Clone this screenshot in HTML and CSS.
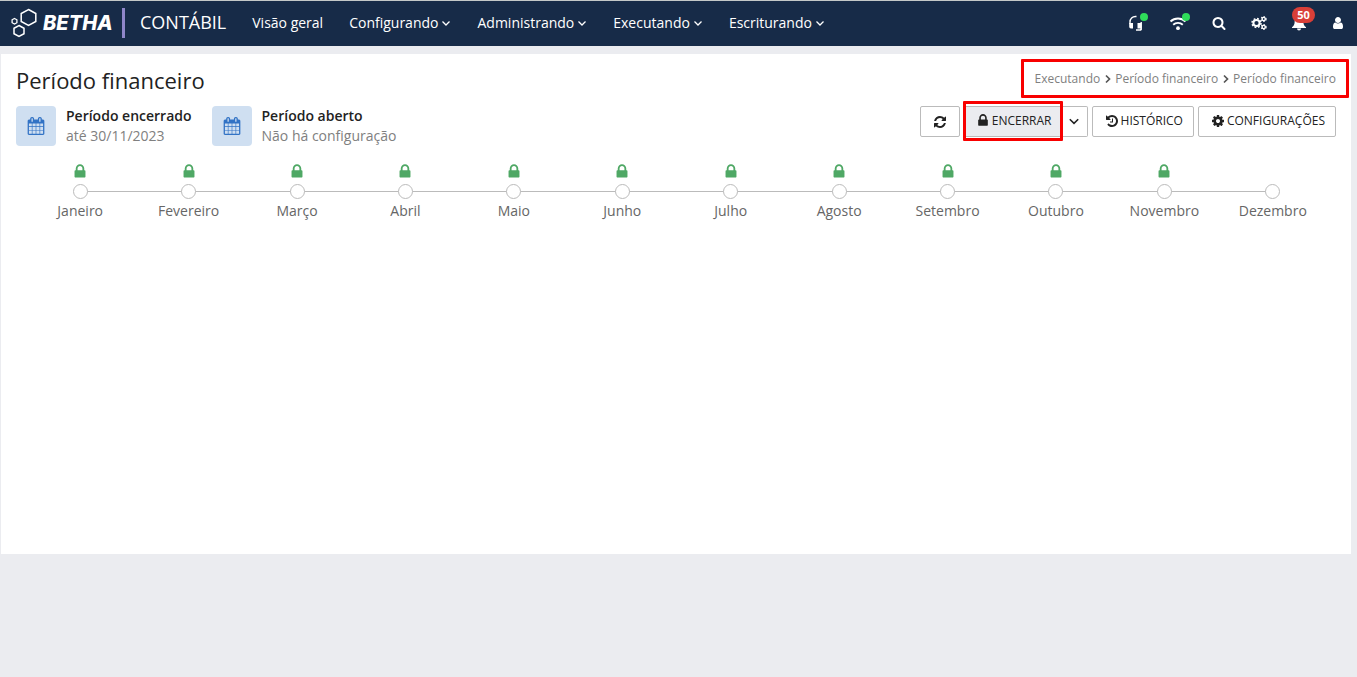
FILE: index.html
```html
<!DOCTYPE html>
<html lang="pt-BR">
<head>
<meta charset="utf-8">
<title>Período financeiro</title>
<link rel="stylesheet" href="styles.css">
</head>
<body>
<svg class="sprite" aria-hidden="true">
  <symbol id="lock" viewBox="320 0 1152 1792"><path d="M640 768h512v-192q0-106-75-181t-181-75-181 75-75 181v192zm832 96v576q0 40-28 68t-68 28h-960q-40 0-68-28t-28-68v-576q0-40 28-68t68-28h32v-192q0-184 132-316t316-132 316 132 132 316v192h32q40 0 68 28t28 68z"/></symbol>
  <symbol id="refresh" viewBox="0 0 1792 1792"><path d="M1639 1056q0 5-1 7-64 268-268 434.500t-478 166.500q-146 0-282.500-55t-243.500-157l-129 129q-19 19-45 19t-45-19-19-45v-448q0-26 19-45t45-19h448q26 0 45 19t19 45-19 45l-137 137q71 66 161 102t187 36q134 0 250-65t186-179q11-17 53-117 8-23 30-23h192q13 0 22.500 9.500t9.500 22.500zm25-800v448q0 26-19 45t-45 19h-448q-26 0-45-19t-19-45 19-45l138-138q-148-137-349-137-134 0-250 65t-186 179q-11 17-53 117-8 23-30 23h-199q-13 0-22.500-9.500t-9.500-22.500v-7q65-268 270-434.500t480-166.500q146 0 284 55.500t245 156.500l130-129q19-19 45-19t45 19 19 45z"/></symbol>
  <symbol id="search" viewBox="0 0 1792 1792"><path d="M1216 832q0-185-131.500-316.500t-316.500-131.500-316.500 131.500-131.500 316.500 131.500 316.500 316.500 131.500 316.500-131.500 131.500-316.500zm512 832q0 52-38 90t-90 38q-54 0-90-38l-343-342q-179 124-399 124-143 0-273.500-55.500t-225-150-150-225-55.500-273.500 55.500-273.500 150-225 225-150 273.500-55.500 273.500 55.500 225 150 150 225 55.500 273.500q0 220-124 399l343 343q37 37 37 90z"/></symbol>
  <symbol id="cog" viewBox="0 0 1792 1792"><path d="M1152 896q0-106-75-181t-181-75-181 75-75 181 75 181 181 75 181-75 75-181zm512-109v222q0 12-8 23t-20 13l-185 28q-19 54-39 91 35 50 107 138 10 12 10 25t-9 23q-27 37-99 108t-94 71q-12 0-26-9l-138-108q-44 23-91 38-16 136-29 186-7 28-36 28h-222q-14 0-24.500-8.500t-11.500-21.500l-28-184q-49-16-90-37l-141 107q-10 9-25 9-14 0-25-11-126-114-165-168-7-10-7-23 0-12 8-23 15-21 51-66.500t54-70.500q-27-50-41-99l-183-27q-13-2-21-12.500t-8-23.500v-222q0-12 8-23t19-13l186-28q14-46 39-92-40-57-107-138-10-12-10-24 0-10 9-23 26-36 98.500-107.500t94.500-71.500q13 0 26 10l138 107q44-23 91-38 16-136 29-186 7-28 36-28h222q14 0 24.500 8.500t11.500 21.500l28 184q49 16 90 37l142-107q9-9 24-9 13 0 25 10 129 119 165 170 7 8 7 22 0 12-8 23-15 21-51 66.500t-54 70.500q26 50 41 98l183 28q13 2 21 12.500t8 23.500z"/></symbol>
  <symbol id="history" viewBox="0 0 1792 1792"><path d="M1664 896q0 156-61 298t-164 245-245 164-298 61q-172 0-327-72.500t-264-204.500q-7-10-6.500-22.500t8.500-20.500l137-138q10-9 25-9 16 2 23 12 73 95 179 147t225 52q104 0 198.500-40.500t163.500-109.500 109.500-163.500 40.500-198.500-40.500-198.500-109.500-163.500-163.500-109.500-198.500-40.500q-98 0-188 35.500t-160 101.500l137 138q31 30 14 69-17 40-59 40h-448q-26 0-45-19t-19-45v-448q0-42 40-59 39-17 69 14l130 129q107-101 244.500-156.500t284.500-55.500q156 0 298 61t245 164 164 245 61 298zm-640-288v448q0 14-9 23t-23 9h-320q-14 0-23-9t-9-23v-64q0-14 9-23t23-9h224v-352q0-14 9-23t23-9h64q14 0 23 9t9 23z"/></symbol>
  <symbol id="calendar" viewBox="0 0 1792 1792"><path d="M192 1664h288v-288h-288v288zm352 0h320v-288h-320v288zm-352-352h288v-320h-288v320zm352 0h320v-320h-320v320zm-352-384h288v-288h-288v288zm736 736h320v-288h-320v288zm-384-736h320v-288h-320v288zm768 736h288v-288h-288v288zm-384-352h320v-320h-320v320zm-352-864v-288q0-13-9.500-22.500t-22.500-9.500h-64q-13 0-22.500 9.500t-9.500 22.500v288q0 13 9.500 22.500t22.500 9.500h64q13 0 22.500-9.500t9.500-22.500zm736 864h288v-320h-288v320zm-384-384h320v-288h-320v288zm384 0h288v-288h-288v288zm32-480v-288q0-13-9.500-22.500t-22.500-9.500h-64q-13 0-22.500 9.500t-9.500 22.500v288q0 13 9.500 22.500t22.500 9.500h64q13 0 22.500-9.500t9.500-22.500zm384-64v1280q0 52-38 90t-90 38h-1408q-52 0-90-38t-38-90v-1280q0-52 38-90t90-38h128v-96q0-66 47-113t113-47h64q66 0 113 47t47 113v96h384v-96q0-66 47-113t113-47h64q66 0 113 47t47 113v96h128q52 0 90 38t38 90z"/></symbol>
  <symbol id="user" viewBox="0 0 1792 1792"><path d="M1536 1399q0 109-62.500 187t-150.500 78h-854q-88 0-150.500-78t-62.500-187q0-85 8.500-160.500t31.500-152 58.500-131 94-89 134.500-34.500q131 128 313 128t313-128q76 0 134.500 34.500t94 89 58.500 131 31.500 152 8.500 160.500zm-256-887q0 159-112.500 271.500t-271.500 112.500-271.500-112.500-112.500-271.500 112.500-271.500 271.500-112.500 271.500 112.500 112.500 271.500z"/></symbol>
  <symbol id="down" viewBox="0 0 10 10"><path d="M1.500 3.500 5 7l3.500-3.500" fill="none" stroke="currentColor" stroke-width="1.300"/></symbol>
  <symbol id="right" viewBox="0 0 8 10"><path d="M2 1.500 5.500 5 2 8.500" fill="none" stroke="currentColor" stroke-width="1.700"/></symbol>
  <symbol id="headset" viewBox="0 0 16 16"><path d="M2 9V7a5.500 5.500 0 0 1 5.500-5.500h1" fill="none" stroke="currentColor" stroke-width="1.400"/><path d="M1.200 8h3.800v5.500H3a1.800 1.800 0 0 1-1.800-1.800zM9.500 8h4v5.500h-4z"/><path d="M13.200 7v7.500H12M8 15h5" fill="none" stroke="currentColor" stroke-width="1.400"/></symbol>
  <symbol id="wifi" viewBox="0 0 18 16"><path d="M1.500 6.500a11 11 0 0 1 15 0M4.200 9.800a7 7 0 0 1 9.600 0" fill="none" stroke="currentColor" stroke-width="1.900"/><circle cx="9" cy="13.200" r="1.900"/></symbol>
  <symbol id="cogs" viewBox="0 0 16 16"><g fill="none" stroke="currentColor"><circle cx="5.500" cy="8" r="3.100" stroke-width="2"/><circle cx="5.500" cy="8" r="4.500" stroke-width="1.500" stroke-dasharray="1.770 1.764"/><circle cx="12.700" cy="4" r="1.600" stroke-width="1.400"/><circle cx="12.700" cy="4" r="2.400" stroke-width="1.200" stroke-dasharray="1.260 1.253"/><circle cx="12.700" cy="12" r="1.600" stroke-width="1.400"/><circle cx="12.700" cy="12" r="2.400" stroke-width="1.200" stroke-dasharray="1.260 1.253"/></g></symbol>
  <symbol id="bell" viewBox="0 0 16 16"><path d="M8 1.500c3 0 4.300 2 4.300 4.500 0 3.500 1 4.800 2.700 6.200v.8H1v-.8C2.700 10.800 3.700 9.500 3.700 6 3.700 3.500 5 1.500 8 1.500zM6 13.500h4a2 2 0 0 1-4 0z"/></symbol>
</svg>

<header class="topbar">
  <a class="brand" href="#" aria-label="Betha">
    <svg class="brand-mark" viewBox="0 0 28 30" aria-hidden="true"><g fill="none" stroke="currentColor" stroke-width="1.500"><path d="M18.500 1.500 25.800 5.500v8l-7.300 4-7.300-4v-8zM9 17.500l5 2.800v5.400l-5 2.800-5-2.800v-5.400z"/><path d="M4.500 10.500l2.400 1.300v2.900L4.500 16l-2.400-1.300v-2.900z" stroke-width="1.300"/></g></svg>
    <span class="brand-name">BETHA</span>
  </a>
  <a class="product" href="#">CONTÁBIL</a>
  <nav class="menu">
    <a href="#">Visão geral</a>
    <a href="#">Configurando<svg><use href="#down"/></svg></a>
    <a href="#">Administrando<svg><use href="#down"/></svg></a>
    <a href="#">Executando<svg><use href="#down"/></svg></a>
    <a href="#">Escriturando<svg><use href="#down"/></svg></a>
  </nav>
  <div class="tools">
    <button class="wide" type="button" aria-label="Suporte"><svg><use href="#headset"/></svg><i class="dot"></i></button>
    <button class="wide" type="button" aria-label="Conexão"><svg class="wifi"><use href="#wifi"/></svg><i class="dot"></i></button>
    <button type="button" aria-label="Pesquisar"><svg class="small"><use href="#search"/></svg></button>
    <button type="button" aria-label="Ferramentas"><svg><use href="#cogs"/></svg></button>
    <button type="button" aria-label="Notificações"><svg><use href="#bell"/></svg><span class="badge">50</span></button>
    <button class="last" type="button" aria-label="Usuário"><svg class="small"><use href="#user"/></svg></button>
  </div>
</header>

<main class="panel">
  <div class="heading">
    <h1>Período financeiro</h1>
    <nav class="crumbs marked">
      <a href="#">Executando</a><svg><use href="#right"/></svg><a href="#">Período financeiro</a><svg><use href="#right"/></svg><a href="#">Período financeiro</a>
    </nav>
  </div>
  <div class="summary">
    <section class="period">
      <span class="tile"><svg><use href="#calendar"/></svg></span>
      <div><h2>Período encerrado</h2><p>até 30/11/2023</p></div>
    </section>
    <section class="period">
      <span class="tile"><svg><use href="#calendar"/></svg></span>
      <div><h2>Período aberto</h2><p>Não há configuração</p></div>
    </section>
    <div class="actions">
      <button class="btn refresh" type="button" aria-label="Atualizar"><svg><use href="#refresh"/></svg></button>
      <div class="split">
        <button class="btn close-period marked" type="button"><svg class="padlock"><use href="#lock"/></svg>ENCERRAR</button>
        <button class="btn more" type="button" aria-label="Mais opções"><svg><use href="#down"/></svg></button>
      </div>
      <button class="btn" type="button"><svg><use href="#history"/></svg>HISTÓRICO</button>
      <button class="btn" type="button"><svg><use href="#cog"/></svg>CONFIGURAÇÕES</button>
    </div>
  </div>
  <ol class="timeline">
    <li><svg><use href="#lock"/></svg><i></i>Janeiro</li>
    <li><svg><use href="#lock"/></svg><i></i>Fevereiro</li>
    <li><svg><use href="#lock"/></svg><i></i>Março</li>
    <li><svg><use href="#lock"/></svg><i></i>Abril</li>
    <li><svg><use href="#lock"/></svg><i></i>Maio</li>
    <li><svg><use href="#lock"/></svg><i></i>Junho</li>
    <li><svg><use href="#lock"/></svg><i></i>Julho</li>
    <li><svg><use href="#lock"/></svg><i></i>Agosto</li>
    <li><svg><use href="#lock"/></svg><i></i>Setembro</li>
    <li><svg><use href="#lock"/></svg><i></i>Outubro</li>
    <li><svg><use href="#lock"/></svg><i></i>Novembro</li>
    <li><svg></svg><i></i>Dezembro</li>
  </ol>
</main>
</body>
</html>
```
FILE: styles.css
```css
* { box-sizing: border-box; }
body {
  margin: 0;
  background: #ebecf0;
  color: #222;
  font: 14px/20px "Open Sans", "Noto Sans", sans-serif;
}
a { color: inherit; text-decoration: none; }
button { font: inherit; color: inherit; cursor: pointer; }
svg { fill: currentColor; flex: none; }
h1, h2, p, ol { margin: 0; padding: 0; }
.sprite { position: absolute; width: 0; height: 0; }

.topbar {
  display: flex;
  align-items: center;
  height: 46px;
  padding: 0 10px 2px;
  border-top: 1px solid #c4c8c8;
  background: #172b48;
  color: #fff;
}
.brand {
  display: flex;
  align-items: center;
  gap: 5px;
  height: 30px;
  width: 115px;
  border-right: 3px solid #8f86c9;
}
.brand-mark { width: 28px; height: 30px; }
.brand-name { font: italic 800 20px/30px Inter, "Open Sans", sans-serif; }
.product { margin: 0 13px 0 15px; padding-bottom: 2px; font-size: 18px; line-height: 24px; }
.menu { display: flex; }
.menu a { display: flex; align-items: center; gap: 3px; padding: 0 13px; white-space: nowrap; }
.menu svg { width: 10px; height: 10px; }
.tools { display: flex; margin-left: auto; }
.tools button {
  position: relative;
  display: flex;
  align-items: center;
  justify-content: center;
  width: 40px;
  height: 36px;
  padding: 0;
  border: 0;
  background: none;
  color: #fff;
}
.tools .wide { width: 42px; }
.tools .last { width: 37px; margin-right: -9px; }
.tools svg { width: 16px; height: 16px; }
.tools .wifi { width: 18px; }
.tools .small { width: 14px; height: 14px; }
.dot {
  position: absolute;
  top: 8px;
  right: 9px;
  width: 8px;
  height: 8px;
  border-radius: 50%;
  background: #2fdc5a;
}
.badge {
  position: absolute;
  top: 2px;
  left: 13px;
  width: 23px;
  border-radius: 8px;
  background: #d93f38;
  font-size: 11px;
  font-weight: 700;
  line-height: 16px;
}

.panel {
  min-height: 500px;
  margin: 8px 6px 0 1px;
  padding: 5px 15px 15px;
  background: #fff;
}
.marked { position: relative; }
.marked::after {
  content: "";
  position: absolute;
  border: 3px solid #f80000;
  border-radius: 1px;
  pointer-events: none;
}
.heading { display: flex; justify-content: space-between; align-items: flex-start; height: 47px; }
h1 { padding-top: 6px; font-size: 22px; font-weight: 400; line-height: 30px; }
.crumbs { display: flex; align-items: center; height: 39px; color: #808080; font-size: 12px; }
.crumbs::after { inset: 0 -13px 0 -14px; }
.crumbs svg { width: 8px; height: 10px; margin: 0 3px 0 4px; color: #555; }

.summary { display: flex; align-items: flex-start; gap: 20px; }
.period { display: flex; gap: 10px; }
.period h2 { font-size: 14px; font-weight: 600; line-height: 20px; }
.period p { color: #808080; }
.tile {
  display: flex;
  align-items: center;
  justify-content: center;
  width: 40px;
  height: 40px;
  border-radius: 4px;
  background: #cfdff1;
  color: #3273c5;
}
.tile svg { width: 18px; height: 18px; }
.actions { display: flex; gap: 4px; margin-left: auto; }
.btn {
  display: flex;
  align-items: center;
  justify-content: center;
  gap: 2px;
  height: 31px;
  padding: 0 10px 2px 12px;
  border: 1px solid #bbb;
  border-radius: 2px;
  background: #fff;
  font-size: 12px;
}
.btn svg { width: 14px; height: 14px; }
.btn .padlock { width: 10px; height: 15px; margin-right: 2px; }
.refresh { width: 40px; padding: 0; }
.split { display: flex; }
.close-period { padding: 0 8px 2px 13px; background: #ebecf0; border-radius: 2px 0 0 2px; }
.close-period::after { inset: -6px -3px -5px -2px; }
.more { width: 27px; padding: 0 0 2px; border-left: 0; border-radius: 0 2px 2px 0; }
.more svg { width: 12px; height: 12px; }

.timeline {
  display: grid;
  grid-template-columns: repeat(12, 1fr);
  margin: 17px 9px 0 10px;
  list-style: none;
  color: #666;
}
.timeline li { position: relative; display: flex; flex-direction: column; align-items: center; }
.timeline svg { width: 12px; height: 17px; margin-bottom: 4px; color: #4fa865; }
.timeline i {
  z-index: 1;
  width: 15px;
  height: 15px;
  margin-bottom: 2px;
  border: 1px solid #bbb;
  border-radius: 50%;
  background: #fff;
}
.timeline li + li::before {
  content: "";
  position: absolute;
  top: 28px;
  right: 50%;
  width: 100%;
  height: 1px;
  background: #bbb;
}
```
